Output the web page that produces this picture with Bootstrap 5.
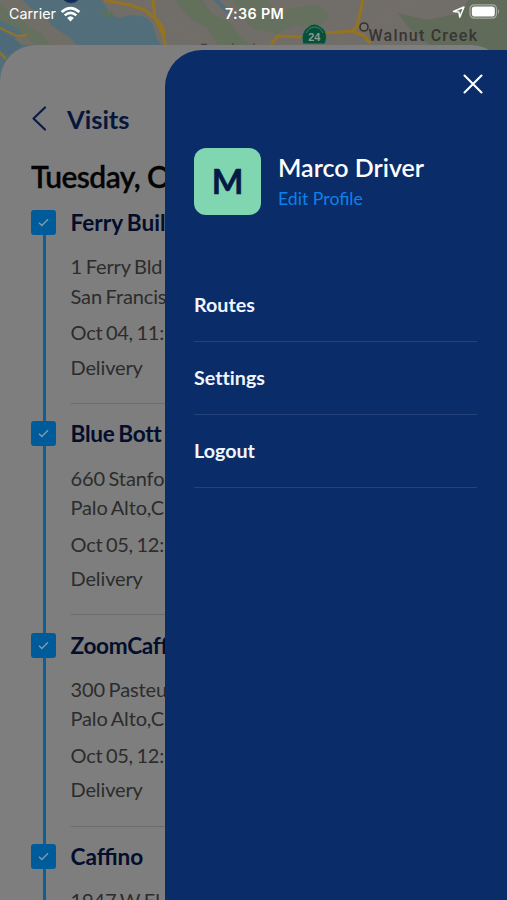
<!DOCTYPE html>
<html lang="en">
<head>
<meta charset="utf-8">
<meta name="viewport" content="width=device-width, initial-scale=1">
<title>Visits</title>
<link href="https://cdn.jsdelivr.net/npm/bootstrap@5.3.0/dist/css/bootstrap.min.css" rel="stylesheet">
<style>
body{font-family:Lato,"Liberation Sans",sans-serif;background:#6f6c69}
.screen{width:507px;height:900px}
.map-bg{top:0;left:0;width:507px;height:80px}
.status-bar{height:44.5px;padding:4px 7px 0 9px;font-family:Inter,"Liberation Sans",sans-serif;font-size:14.3px;color:#fff;line-height:20px}
.status-bar .side{flex:1 1 0}
.clock{font-weight:600;letter-spacing:.35px}
.sheet{height:855.5px;background:#7e7e7e;border-radius:36px 36px 0 0;padding:59px 0 0 31px}
.sheet h1{font-size:25.5px;font-weight:700;line-height:30px;color:#06163d;margin-left:19px}
.sheet h2{font-size:30px;font-weight:600;line-height:36px;color:#040404;margin-top:24px;letter-spacing:-.6px;-webkit-text-stroke:.3px #040404}
.visits{padding-top:16.5px}
.visit{height:211.4px}
.rail{width:25px}
.tick{width:25px;height:25px;border-radius:3px;background:#005b9b}
.rail-line{width:2.5px;margin-left:12px;background:#0b609c}
.visit-body{margin-left:14.5px;color:#2c2c2c;font-size:20px;line-height:29.4px;letter-spacing:-.13px;word-spacing:-1.3px}
.visit-body h3{font-size:22.6px;font-weight:700;line-height:25px;color:#040d2c;letter-spacing:0}
.visit-body .dense{letter-spacing:-.3px}
.address{margin-top:17.3px}
.when{margin-top:7.2px;letter-spacing:-.25px}
.kind{margin-top:4.8px}
.visit-end{height:1px;background:#6c6c6c;margin-top:21.2px}
.drawer{top:50px;left:165px;width:342px;height:850px;background:#0a2c68;border-radius:37px 0 0 0;padding:24px 30px 0 29px;color:#fff}
.avatar{width:67px;height:67px;border-radius:12px;background:#80d6b0;color:#061a46;font-size:33.5px;font-weight:700;line-height:1;padding-top:2px;-webkit-text-stroke:.6px #061a46}
.profile{margin-top:53.5px}
.profile-text{margin-left:17px;padding-top:4px}
.profile-name{font-size:25px;font-weight:600;line-height:30px}
.profile-link{font-size:17.7px;line-height:24px;color:#0c82ea;text-decoration:none;margin-top:5px}
.menu{margin-top:54px}
.menu a{height:73.2px;padding-top:21.3px;border-bottom:1px solid #254379;font-size:19.7px;font-weight:700;line-height:30px;color:#f0f5ff;text-decoration:none;font-variant-ligatures:none}
.close-icon{margin-right:-6px}
</style>
<script src="https://cdn.jsdelivr.net/npm/bootstrap@5.3.0/dist/js/bootstrap.bundle.min.js"></script>
</head>
<body>
<div class="screen position-relative overflow-hidden">
  <svg class="map-bg position-absolute" viewBox="0 0 507 80" aria-hidden="true">
    <rect width="507" height="80" fill="#716d69"/>
    <path d="M0 0H102L109 13L118 18L132 15L145 17L152 23L157 39L161 45V80H0Z" fill="#526e7a"/>
    <path d="M0 0H22L31 8L43 14L52 26L69 37L77 45H0V34L14 39L24 34L13 24L0 17Z" fill="#716e67"/>
    <path d="M0 4L10 13L20 17L30 27L42 34L50 45H34L20 30L7 23L0 21Z" fill="#66705f"/>
    <path d="M0 31L13 38L22 45L8 55L0 49Z" fill="#4e6978"/>
    <path d="M100 10L107 13L114 11L111 16L104 18L102 15Z" fill="#5c7159"/>
    <path d="M176 0H202L212 14L228 21L240 36L251 45H218L207 28L192 20L182 9Z" fill="#63705c"/>
    <path d="M213 0H219L232 14L227 13Z" fill="#526d78"/>
    <path d="M233 0H267L276 13L297 7L318 5L329 16L318 28L295 25L276 34L251 28L240 13Z" fill="#65705e"/>
    <path d="M398 13L427 20L457 14L469 0H507V52H473L452 45L432 47L409 28Z" fill="#616b59"/>
    <path d="M365 30L403 7L415 0M166 20L182 31L202 42M340 44L325 28" fill="none" stroke="#7a7066" stroke-width="1"/>
    <g fill="none" stroke="#957421" stroke-linejoin="round">
      <path d="M104 0L130 5L145 10L153 17M153 0L155 18L163 32L165 45" stroke-width="3"/>
      <path d="M157 20L164 34" stroke-width="5"/>
      <path d="M271 44L278 36L301 37M326 33L352 31L357 27L363 0M352 31L363 35L371 44" stroke-width="3"/>
      <path d="M0 28L17 36L27 35M0 53L6 59" stroke-width="2"/>
    </g>
    <path d="M201 44.3H207M232 44H234M253 44H255" stroke="#454340" stroke-width="1.2"/>
    <circle cx="71" cy="-7" r="10" fill="#092b67" stroke="#343f4b" stroke-width="1"/>
    <path d="M303 44C301 36 303 30 308 27Q314 21 321 27C326 30 328 36 325 44Z" fill="#064f38" stroke="#587568" stroke-width="1"/>
    <path d="M306 33Q309 27 314 27Q320 27 323 33" fill="none" stroke="#587568"/>
    <text x="314.3" y="41" text-anchor="middle" font-family="Liberation Sans, sans-serif" font-weight="700" font-size="11" fill="#8b9b93">24</text>
    <circle cx="364" cy="27" r="4" fill="#77736d" stroke="#36332f" stroke-width="1.6"/>
    <text x="368.5" y="41" textLength="108.5" font-family="Roboto, sans-serif" font-weight="500" font-size="16" fill="#383532">Walnut Creek</text>
  </svg>

  <header class="status-bar position-relative d-flex align-items-start">
    <div class="side d-flex align-items-center">
      <span>Carrier</span>
      <svg class="ms-1" width="21" height="17" viewBox="0 0 21 17" aria-label="Wi-Fi"><g fill="none" stroke="#fff" stroke-width="2.6"><path d="M1.6 6Q10.5 -1.8 19.4 6"/><path d="M4.7 9.4Q10.5 4.2 16.3 9.4"/></g><path d="M7.2 12Q10.5 8.6 13.8 12L10.5 15.4Z" fill="#fff"/></svg>
    </div>
    <span class="clock">7:36 PM</span>
    <div class="side d-flex align-items-center justify-content-end gap-1">
      <svg width="13" height="13" viewBox="0 0 13 13" aria-label="Location"><path d="M1.5 6.5L12 2L7.7 12.2L6.9 7Z" fill="none" stroke="#fff" stroke-width="1.5" stroke-linejoin="round"/></svg>
      <svg width="31" height="15" viewBox="0 0 31 15" aria-label="Battery"><rect x="1" y=".8" width="26.5" height="13.4" rx="4.2" fill="none" stroke="#aaa8a5" stroke-width="1.2"/><rect x="2.8" y="2.5" width="23" height="10" rx="2.8" fill="#fff"/><path d="M29 5Q31 7.5 29 10Z" fill="#aaa8a5"/></svg>
    </div>
  </header>

  <main class="sheet position-relative">
    <div class="d-flex align-items-center">
      <svg width="17" height="28" viewBox="0 0 17 28" aria-label="Back"><path d="M14 2.5L2.5 13.5L14 24.5" fill="none" stroke="#0b1a44" stroke-width="2.2" stroke-linecap="round" stroke-linejoin="round"/></svg>
      <h1 class="mb-0">Visits</h1>
    </div>
    <h2 class="mb-0 text-nowrap">Tuesday, O</h2>
    <div class="visits">
      <article class="visit d-flex">
        <div class="rail d-flex flex-column"><div class="tick d-flex align-items-center justify-content-center"><svg width="11" height="9" viewBox="0 0 11 9"><path d="M1 4.7L3.9 7.4L10 1.2" fill="none" stroke="#8299ab" stroke-width="1.4"/></svg></div><div class="rail-line flex-grow-1"></div></div>
        <div class="visit-body flex-grow-1 text-nowrap"><h3 class="mb-0">Ferry Buil</h3><div class="address">1 Ferry Bld<br>San Francis</div><div class="when">Oct 04, 11:</div><div class="kind">Delivery</div><div class="visit-end"></div></div>
      </article>
      <article class="visit d-flex">
        <div class="rail d-flex flex-column"><div class="tick d-flex align-items-center justify-content-center"><svg width="11" height="9" viewBox="0 0 11 9"><path d="M1 4.7L3.9 7.4L10 1.2" fill="none" stroke="#8299ab" stroke-width="1.4"/></svg></div><div class="rail-line flex-grow-1"></div></div>
        <div class="visit-body flex-grow-1 text-nowrap"><h3 class="mb-0 dense">Blue Bott</h3><div class="address">660 Stanfo<br>Palo Alto,C</div><div class="when">Oct 05, 12:</div><div class="kind">Delivery</div><div class="visit-end"></div></div>
      </article>
      <article class="visit d-flex">
        <div class="rail d-flex flex-column"><div class="tick d-flex align-items-center justify-content-center"><svg width="11" height="9" viewBox="0 0 11 9"><path d="M1 4.7L3.9 7.4L10 1.2" fill="none" stroke="#8299ab" stroke-width="1.4"/></svg></div><div class="rail-line flex-grow-1"></div></div>
        <div class="visit-body flex-grow-1 text-nowrap"><h3 class="mb-0 dense">ZoomCaff</h3><div class="address">300 Pasteu<br>Palo Alto,C</div><div class="when">Oct 05, 12:</div><div class="kind">Delivery</div><div class="visit-end"></div></div>
      </article>
      <article class="visit d-flex">
        <div class="rail d-flex flex-column"><div class="tick d-flex align-items-center justify-content-center"><svg width="11" height="9" viewBox="0 0 11 9"><path d="M1 4.7L3.9 7.4L10 1.2" fill="none" stroke="#8299ab" stroke-width="1.4"/></svg></div><div class="rail-line flex-grow-1"></div></div>
        <div class="visit-body flex-grow-1 text-nowrap"><h3 class="mb-0">Caffino</h3><div class="address">1947 W El</div></div>
      </article>
    </div>
  </main>

  <aside class="drawer position-absolute">
    <div class="d-flex justify-content-end"><svg class="close-icon" width="20" height="20" viewBox="0 0 20 20" aria-label="Close"><path d="M1.5 1.5L18.5 18.5M18.5 1.5L1.5 18.5" stroke="#fff" stroke-width="2.1" stroke-linecap="round"/></svg></div>
    <div class="profile d-flex">
      <div class="avatar d-flex align-items-center justify-content-center">M</div>
      <div class="profile-text d-flex flex-column"><span class="profile-name">Marco Driver</span><a class="profile-link" href="#">Edit Profile</a></div>
    </div>
    <nav class="menu d-flex flex-column"><a href="#">Routes</a><a href="#">Settings</a><a href="#">Logout</a></nav>
  </aside>
</div>
</body>
</html>
